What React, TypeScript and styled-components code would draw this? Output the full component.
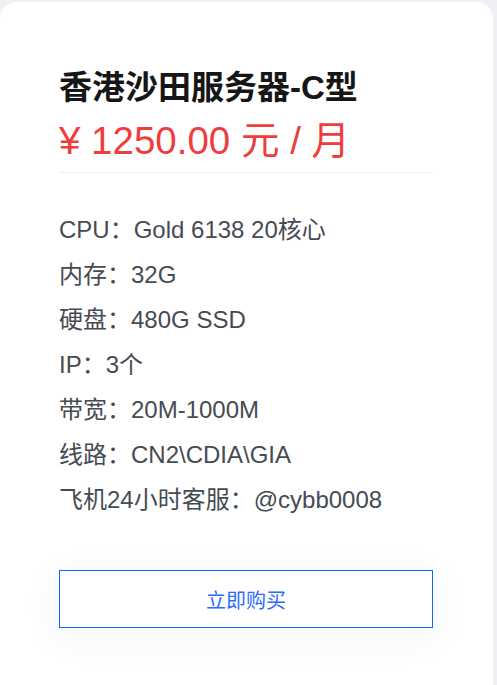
import React from "react";
import styled, { createGlobalStyle } from "styled-components";

const GlobalStyle = createGlobalStyle`
  html, body {
    margin: 0;
    padding: 0;
    background: #eef0f5;
  }
  body {
    font-family: "Liberation Sans", Arial, "Noto Sans CJK SC", sans-serif;
  }
`;

const Page = styled.div`
  padding-top: 2px;
  width: 497px;
  height: 685px;
  overflow: hidden;
  box-sizing: border-box;
`;

const Card = styled.div`
  width: 493px;
  height: 700px;
  box-sizing: border-box;
  background: #ffffff;
  border-radius: 16px;
  padding: 64px 60px 0 59px;
`;

const Title = styled.h2`
  margin: 0;
  font-size: 33px;
  line-height: 44px;
  font-weight: 700;
  color: #161616;
`;

const Price = styled.div`
  margin-top: 9px;
  padding-bottom: 9px;
  border-bottom: 1px solid #eeeff2;
  font-size: 38.5px;
  line-height: 44px;
  color: #f03c3c;
`;

const Specs = styled.ul`
  list-style: none;
  margin: 34px 0 0;
  padding: 0;
`;

const SpecRow = styled.li`
  font-size: 24px;
  line-height: 45px;
  color: #464b53;
  white-space: nowrap;
`;

const BuyButton = styled.button`
  display: block;
  width: 100%;
  height: 58px;
  margin-top: 48px;
  background: #ffffff;
  border: 1px solid #1166ff;
  border-radius: 0;
  color: #2f6bff;
  font-family: inherit;
  font-size: 20px;
  cursor: pointer;
  box-shadow: 0 8px 40px rgba(30, 60, 140, 0.06);
`;

const specs = [
  "CPU：Gold 6138 20核心",
  "内存：32G",
  "硬盘：480G SSD",
  "IP：3个",
  "带宽：20M-1000M",
  "线路：CN2\\CDIA\\GIA",
  "飞机24小时客服：@cybb0008",
];

const App: React.FC = () => {
  return (
    <>
      <GlobalStyle />
      <Page>
        <Card>
          <Title>香港沙田服务器-C型</Title>
          <Price>¥ 1250.00 元 / 月</Price>
          <Specs>
            {specs.map((s) => (
              <SpecRow key={s}>{s}</SpecRow>
            ))}
          </Specs>
          <BuyButton>立即购买</BuyButton>
        </Card>
      </Page>
    </>
  );
};

export default App;
